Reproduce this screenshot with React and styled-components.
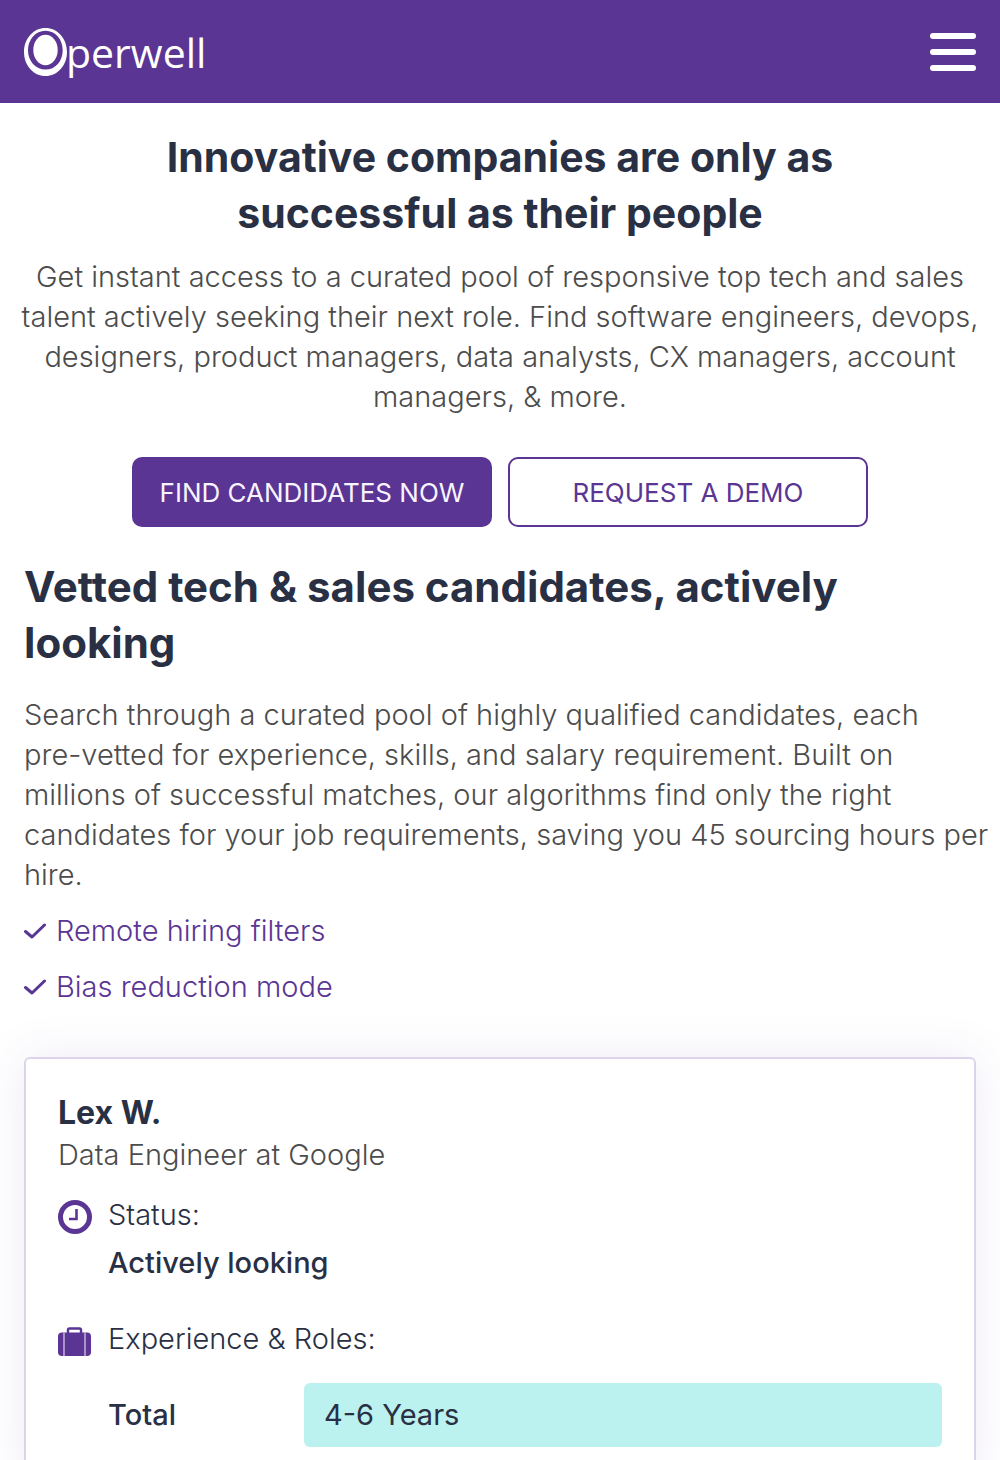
import React from "react";
import styled, { createGlobalStyle, css } from "styled-components";

const purple = "#5a3594";
const navy = "#293044";
const grey = "#4c4c4c";

const GlobalStyle = createGlobalStyle`
  *, *::before, *::after { box-sizing: border-box; }
  body {
    margin: 0;
    background: #fff;
    color: ${navy};
    font-family: Inter, "Liberation Sans", sans-serif;
    font-size: 29px;
    line-height: 40px;
    font-weight: 300;
  }
  h1, h2, h3, p, ul, dl, dd { margin: 0; padding: 0; }
`;

const Page = styled.div`
  overflow: hidden;
`;

const Header = styled.header`
  display: flex;
  align-items: center;
  justify-content: space-between;
  height: 103px;
  padding: 0 24px;
  background: ${purple};
`;

const LogoLink = styled.a`
  display: flex;
  color: #fff;
  text-decoration: none;
`;

const MenuButton = styled.button`
  display: flex;
  flex-direction: column;
  gap: 10px;
  padding: 0;
  border: 0;
  background: none;
  cursor: pointer;
`;

const MenuBar = styled.span`
  width: 46px;
  height: 6px;
  border-radius: 3px;
  background: #fff;
`;

const Main = styled.main`
  padding: 26px 24px 32px;
`;

const headingText = css`
  color: ${navy};
  line-height: 56px;
  font-weight: 700;
`;

const Hero = styled.section`
  margin: 0 -8px;
  text-align: center;
`;

const HeroTitle = styled.h1`
  ${headingText}
  max-width: 720px;
  margin: 0 auto 16px;
  font-size: 41px;
`;

const Copy = styled.p`
  color: ${grey};
`;

const Actions = styled.div`
  display: flex;
  justify-content: center;
  gap: 16px;
  margin-top: 40px;
`;

const Action = styled.a`
  display: flex;
  align-items: center;
  justify-content: center;
  width: 360px;
  height: 70px;
  padding-top: 2px;
  border: 2px solid ${purple};
  border-radius: 10px;
  background: ${(p) => (p.$filled ? purple : "#fff")};
  color: ${(p) => (p.$filled ? "#f8f4ff" : purple)};
  font-size: 26px;
  font-weight: 400;
  text-decoration: none;
  white-space: nowrap;
`;

const Feature = styled.section`
  margin: 32px -16px 0 0;
`;

const FeatureTitle = styled.h2`
  ${headingText}
  margin-bottom: 24px;
  font-size: 42px;
`;

const Checks = styled.ul`
  display: grid;
  gap: 16px;
  margin-top: 16px;
  list-style: none;
  color: ${purple};
`;

const Check = styled.li`
  display: flex;
  align-items: center;
  gap: 10px;
`;

const Card = styled.article`
  margin-top: 50px;
  padding: 32px;
  border: 2px solid #dcd5e9;
  border-radius: 6px;
  background: #fff;
  box-shadow: 0 0 48px rgba(90, 53, 148, 0.1);
`;

const Name = styled.h3`
  font-size: 32px;
  line-height: 44px;
  font-weight: 700;
`;

const Detail = styled.section`
  display: grid;
  grid-template-columns: 34px 1fr;
  column-gap: 16px;
  margin-top: ${(p) => p.$space}px;
`;

const IconCell = styled.span`
  display: flex;
  align-items: center;
  height: 44px;
`;

const Value = styled.p`
  margin-top: 8px;
  font-weight: 500;
`;

const Roles = styled.dl`
  display: grid;
  grid-template-columns: 196px 1fr;
  align-items: center;
  margin-top: 24px;
`;

const Role = styled.dt`
  font-weight: 500;
`;

const Years = styled.dd`
  padding: 12px 20px;
  border-radius: 6px;
  background: #bbf1ee;
  font-weight: 400;
`;

function Logo() {
  return (
    <svg width="200" height="63" viewBox="0 -6 200 63" role="img" aria-label="Operwell">
      <path
        fill="#fff"
        fillRule="evenodd"
        d="M21.500 2C33.500 2 43 12.500 43 26S33.500 50 21.500 50 0 39.500 0 26 9.500 2 21.500 2ZM21.500 4.700C11.500 4.700 4 13.500 4 24.200S11.500 43.600 21.500 43.600 38.700 35 38.700 24.200 31.500 4.700 21.500 4.700Z"
      />
      <ellipse cx="21.500" cy="24" rx="12.200" ry="15.200" fill="#fff" />
      <text x="42" y="42" fill="#fff" fontFamily="'Open Sans', 'Noto Sans', sans-serif" fontSize="41" fontWeight="400">
        perwell
      </text>
    </svg>
  );
}

function CheckIcon() {
  return (
    <svg width="22" height="16" viewBox="0 0 22 16" aria-hidden="true">
      <path d="M1.500 8.500 8 14 20.500 2" fill="none" stroke={purple} strokeWidth="3" strokeLinecap="round" strokeLinejoin="round" />
    </svg>
  );
}

function ClockIcon() {
  return (
    <svg width="34" height="34" viewBox="0 0 34 34" aria-hidden="true">
      <circle cx="17" cy="17" r="14.500" fill="none" stroke={purple} strokeWidth="5" />
      <path d="M18.500 9V19H11" fill="none" stroke={purple} strokeWidth="2.600" />
    </svg>
  );
}

function CaseIcon() {
  return (
    <svg width="33" height="32" viewBox="0 -2 33 32" aria-hidden="true">
      <path d="M10 6V3Q10 1.500 11.500 1.500H21.500Q23 1.500 23 3V6" fill="none" stroke={purple} strokeWidth="2.400" />
      <rect y="5.500" width="33" height="23.500" rx="4" fill={purple} />
      <path d="M6 5.500V29M27 5.500V29" stroke="#cbbbe0" strokeWidth="1.400" />
    </svg>
  );
}

export default function App() {
  return (
    <Page>
      <GlobalStyle />
      <Header>
        <LogoLink href="#home">
          <Logo />
        </LogoLink>
        <MenuButton type="button" aria-label="Menu">
          <MenuBar />
          <MenuBar />
          <MenuBar />
        </MenuButton>
      </Header>
      <Main>
        <Hero>
          <HeroTitle>Innovative companies are only as successful as their people</HeroTitle>
          <Copy>
            Get instant access to a curated pool of responsive top tech and sales talent actively seeking their next
            role. Find software engineers, devops, designers, product managers, data analysts, CX managers, account
            managers, &amp; more.
          </Copy>
          <Actions>
            <Action href="#candidates" $filled>
              FIND CANDIDATES NOW
            </Action>
            <Action href="#demo">REQUEST A DEMO</Action>
          </Actions>
        </Hero>
        <Feature>
          <FeatureTitle>
            Vetted tech &amp; sales candidates, actively
            <br />
            looking
          </FeatureTitle>
          <Copy>
            Search through a curated pool of highly qualified candidates, each
            <br />
            pre-vetted for experience, skills, and salary requirement. Built on millions of successful matches, our
            algorithms find only the right candidates for your job requirements, saving you 45 sourcing hours per hire.
          </Copy>
          <Checks>
            <Check>
              <CheckIcon />
              Remote hiring filters
            </Check>
            <Check>
              <CheckIcon />
              Bias reduction mode
            </Check>
          </Checks>
        </Feature>
        <Card>
          <Name>Lex W.</Name>
          <Copy>Data Engineer at Google</Copy>
          <Detail $space={20}>
            <IconCell>
              <ClockIcon />
            </IconCell>
            <div>
              <p>Status:</p>
              <Value>Actively looking</Value>
            </div>
          </Detail>
          <Detail $space={36}>
            <IconCell>
              <CaseIcon />
            </IconCell>
            <div>
              <p>Experience &amp; Roles:</p>
              <Roles>
                <Role>Total</Role>
                <Years>4-6 Years</Years>
              </Roles>
            </div>
          </Detail>
        </Card>
      </Main>
    </Page>
  );
}
